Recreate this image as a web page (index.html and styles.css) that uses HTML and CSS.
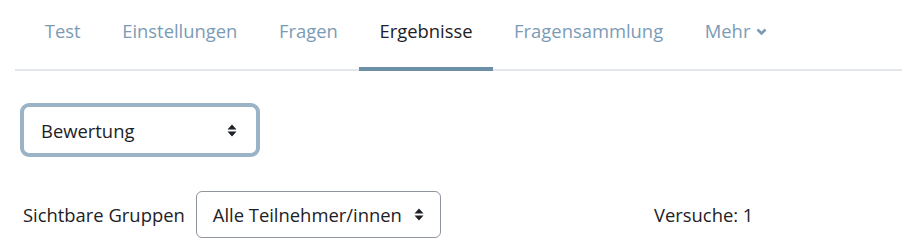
FILE: index.html
```html
<!DOCTYPE html>
<html lang="de">
<head>
<meta charset="utf-8">
<link rel="stylesheet" href="styles.css">
</head>
<body>
<nav class="tabs">
  <a class="tab">Test</a>
  <a class="tab">Einstellungen</a>
  <a class="tab">Fragen</a>
  <a class="tab active">Ergebnisse</a>
  <a class="tab">Fragensammlung</a>
  <a class="tab">Mehr <svg class="chev" width="11" height="8" viewBox="0 0 11 8"><path d="M1.5 1.5 L5.5 5.5 L9.5 1.5" fill="none" stroke="currentColor" stroke-width="2.6"/></svg></a>
</nav>
<div class="content">
  <div class="select focus">
    <span>Bewertung</span>
    <svg class="arrows" width="10" height="13" viewBox="0 0 10 13"><path d="M5 0.5 L9.5 5.5 L0.5 5.5 Z M0.5 7.5 L9.5 7.5 L5 12.5 Z" fill="#1d2125"/></svg>
  </div>
  <div class="row">
    <div class="group">
      <span class="label">Sichtbare Gruppen</span>
      <div class="select small">
        <span>Alle Teilnehmer/innen</span>
        <svg class="arrows" width="10" height="13" viewBox="0 0 10 13"><path d="M5 0.5 L9.5 5.5 L0.5 5.5 Z M0.5 7.5 L9.5 7.5 L5 12.5 Z" fill="#1d2125"/></svg>
      </div>
    </div>
    <span class="attempts">Versuche: 1</span>
  </div>
</div>
</body>
</html>
```
FILE: styles.css
```css
html, body {
  margin: 0;
  padding: 0;
  background: #fff;
}
body {
  font-family: "Open Sans", "Noto Sans", sans-serif;
  font-size: 18.4px;
  color: #1d2125;
}
.tabs {
  display: flex;
  margin-left: 15px;
  padding-left: 9px;
  border-bottom: 2px solid #e3e7eb;
  height: 71px;
  box-sizing: border-box;
}
.tab {
  display: flex;
  align-items: center;
  padding: 0 20.8px 6px;
  color: #7b9bb5;
  border-bottom: 4px solid transparent;
  margin-bottom: -2px;
  white-space: nowrap;
}
.tab.active {
  color: #1d2125;
  border-bottom-color: #6d8fa6;
}
.chev {
  margin-left: 6px;
  margin-top: 2px;
}
.content {
  padding: 32px 0 0 20px;
}
.select {
  display: flex;
  align-items: center;
  justify-content: space-between;
  box-sizing: border-box;
  background: #fff;
}
.select.focus {
  width: 240px;
  height: 54px;
  border: 4px solid #9ab3c6;
  border-radius: 9px;
  padding: 0 19px 0 17px;
}
.row {
  display: flex;
  align-items: center;
  margin-top: 34px;
}
.group {
  display: flex;
  align-items: center;
  margin-left: 3px;
  width: 631px;
}
.label {
  margin-right: 11px;
}
.select.small {
  width: 245px;
  height: 47px;
  border: 1px solid #8f959e;
  border-radius: 6px;
  padding: 0 16px 0 16px;
}
```
